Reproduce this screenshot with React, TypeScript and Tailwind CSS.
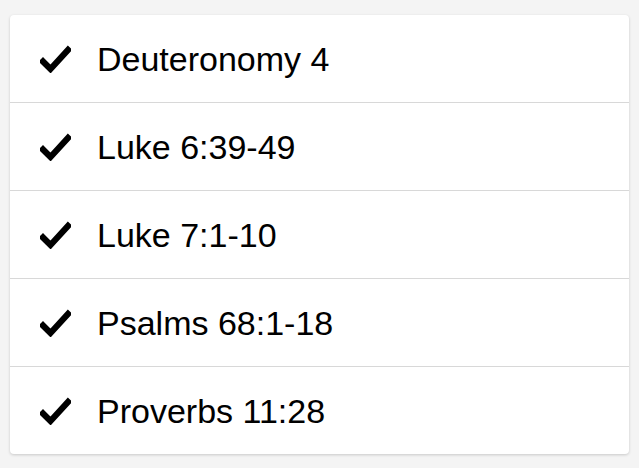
const readings = ['Deuteronomy 4', 'Luke 6:39-49', 'Luke 7:1-10', 'Psalms 68:1-18', 'Proverbs 11:28'];

function Check() {
  return (
    <svg width="31" height="28" viewBox="0 0 31 28" className="shrink-0">
      <polyline points="3,16.5 10.5,24 28,5" fill="none" stroke="#000" strokeWidth="6.2" strokeLinecap="square" strokeLinejoin="miter" />
    </svg>
  );
}

export default function App() {
  return (
    <div className="min-h-[468px] w-full bg-[#f4f4f4] px-[10px] pt-[15px] pb-[13px]" style={{ fontFamily: '"Liberation Sans", Arial, sans-serif' }}>
      <div className="rounded-[4px] bg-white shadow-[0_1px_3px_rgba(0,0,0,0.18)]">
        {readings.map((r, i) => (
          <div key={r} className={`flex items-center pl-[30px] ${i > 0 ? 'h-[88px] border-t border-[#d8d8d8]' : 'h-[87px]'}`}>
            <Check />
            <span className="ml-[26px] text-[34px] leading-none text-black">{r}</span>
          </div>
        ))}
      </div>
    </div>
  );
}
